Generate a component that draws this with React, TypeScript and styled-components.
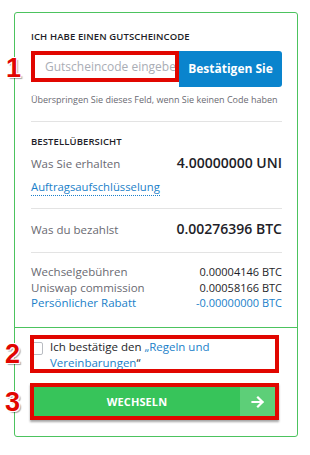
import React from "react";
import styled, { createGlobalStyle } from "styled-components";

const Global = createGlobalStyle`
  html, body { margin: 0; padding: 0; background: #fff; }
  body { font-family: "Open Sans", "Liberation Sans", sans-serif; -webkit-font-smoothing: antialiased; }
  * { box-sizing: border-box; }
`;

const Page = styled.div`
  padding: 12px 12px 18px 14px;
`;

const Card = styled.div`
  position: relative;
  width: 284px;
  border: 1px solid #4cc35e;
  border-radius: 3px;
`;

const Section = styled.div`
  padding: 17px 15px 16px 16px;
`;

const Heading = styled.div`
  font-size: 9.5px;
  line-height: 14px;
  font-weight: 600;
  color: #1e1e28;
  text-transform: uppercase;
  letter-spacing: 0.1px;
`;

const Divider = styled.div<{ $top: number }>`
  height: 1px;
  background: #e3e3e3;
  margin: ${(p) => p.$top}px 0 0;
`;

const Highlight = styled.div<{ $w: number; $h: number }>`
  position: relative;
  width: ${(p) => p.$w}px;
  height: ${(p) => p.$h}px;
  &::after {
    content: "";
    position: absolute;
    inset: 0;
    border: 4px solid #e10600;
    pointer-events: none;
  }
`;

const Num = styled.span<{ $top: number }>`
  position: absolute;
  left: -25px;
  top: ${(p) => p.$top}px;
  font-family: "Liberation Sans", Arial, sans-serif;
  font-weight: 700;
  font-size: 27px;
  line-height: 27px;
  color: #e10600;
  text-shadow: -1px -1px 0 #fff, 1px -1px 0 #fff, -1px 1px 0 #fff, 1px 1px 0 #fff,
    2px 2px 1px rgba(0, 0, 0, 0.35);
`;

const CodeRow = styled.div`
  display: flex;
  margin-top: 7px;
  height: 36px;
`;

const CodeInput = styled.input`
  width: 148px;
  height: 31px;
  border: none;
  outline: none;
  padding: 0 0 0 14px;
  font-family: inherit;
  font-size: 12px;
  color: #333;
  background: #fff;
  &::placeholder { color: #a9adb5; }
`;

const ConfirmButton = styled.button`
  flex: 1;
  height: 36px;
  border: none;
  border-radius: 0 3px 3px 0;
  background: #0a84cd;
  color: #fff;
  font-family: inherit;
  font-weight: 700;
  font-size: 12px;
  padding: 0 0 2px;
`;

const Hint = styled.div`
  margin-top: 6px;
  font-size: 9px;
  line-height: 14px;
  color: #6a6a72;
  white-space: nowrap;
`;

const SubHeading = styled(Heading)`
  margin-top: 13px;
`;

const Row = styled.div<{ $top: number }>`
  display: flex;
  justify-content: space-between;
  align-items: baseline;
  margin-top: ${(p) => p.$top}px;
  line-height: 20px;
`;

const Label = styled.span`
  font-size: 11.5px;
  color: #6a6a72;
`;

const BigValue = styled.span`
  font-size: 14px;
  font-weight: 600;
  color: #1e1e28;
`;

const Link = styled.a`
  display: inline-block;
  margin-top: 4px;
  font-size: 11.3px;
  line-height: 17px;
  color: #1a7fc9;
  text-decoration: none;
  border-bottom: 1px dotted #1a7fc9;
`;

const FeeList = styled.div`
  margin-top: 11px;
  display: flex;
  flex-direction: column;
`;

const FeeRow = styled.div<{ $blue?: boolean }>`
  display: flex;
  justify-content: space-between;
  line-height: 15.7px;
  font-size: 11.5px;
  color: ${(p) => (p.$blue ? "#1a7fc9" : "#6a6a72")};
`;

const FeeValue = styled.span<{ $blue?: boolean }>`
  font-size: 11px;
  color: ${(p) => (p.$blue ? "#1a7fc9" : "#1e1e28")};
`;

const Bottom = styled.div`
  border-top: 1px solid #4cc35e;
  padding: 7px 15px 16px 15px;
`;

const Agree = styled.label`
  display: flex;
  align-items: flex-start;
  height: 100%;
  padding: 4px 0 0 1px;
  font-size: 11.5px;
  line-height: 16px;
  color: #1e1e28;
`;

const Box = styled.span`
  flex: none;
  width: 12px;
  height: 13px;
  margin: 3px 7px 0 0;
  border: 1px solid #b9bcc2;
  border-radius: 2px;
  background: #fff;
`;

const AgreeLink = styled.span`
  color: #1a7fc9;
`;

const ButtonWrap = styled(Highlight)`
  margin-top: 10px;
  box-shadow: 0 2px 2px rgba(0, 0, 0, 0.35);
`;

const Exchange = styled.button`
  display: flex;
  width: 100%;
  height: 100%;
  border: none;
  padding: 0;
  background: #37c45a;
  font-family: inherit;
`;

const ExchangeLabel = styled.span`
  flex: 1;
  display: flex;
  align-items: center;
  justify-content: center;
  padding: 0 0 0 4px;
  color: #fff;
  font-weight: 700;
  font-size: 11px;
  letter-spacing: 0.1px;
`;

const ArrowPart = styled.span`
  width: 36px;
  display: flex;
  align-items: center;
  justify-content: center;
  background: #5dcf78;
  margin-right: 3px;
`;

export default function App() {
  return (
    <Page>
      <Global />
      <Card>
        <Section>
          <Heading>Ich habe einen Gutscheincode</Heading>
          <CodeRow>
            <Highlight $w={148} $h={31}>
              <Num $top={4}>1</Num>
              <CodeInput placeholder="Gutscheincode eingeben" />
            </Highlight>
            <ConfirmButton>Bestätigen Sie</ConfirmButton>
          </CodeRow>
          <Hint>Überspringen Sie dieses Feld, wenn Sie keinen Code haben</Hint>
          <Divider $top={14} />
          <SubHeading>Bestellübersicht</SubHeading>
          <Row $top={4}>
            <Label>Was Sie erhalten</Label>
            <BigValue>4.00000000 UNI</BigValue>
          </Row>
          <Link>Auftragsaufschlüsselung</Link>
          <Divider $top={12} />
          <Row $top={10}>
            <Label>Was du bezahlst</Label>
            <BigValue>0.00276396 BTC</BigValue>
          </Row>
          <Divider $top={12} />
          <FeeList>
            <FeeRow>
              <span>Wechselgebühren</span>
              <FeeValue>0.00004146 BTC</FeeValue>
            </FeeRow>
            <FeeRow>
              <span>Uniswap commission</span>
              <FeeValue>0.00058166 BTC</FeeValue>
            </FeeRow>
            <FeeRow $blue>
              <span>Persönlicher Rabatt</span>
              <FeeValue $blue>-0.00000000 BTC</FeeValue>
            </FeeRow>
          </FeeList>
        </Section>
        <Bottom>
          <Highlight $w={249} $h={38}>
            <Num $top={6}>2</Num>
            <Agree>
              <Box />
              <span>
                Ich bestätige den <AgreeLink>„Regeln und</AgreeLink>
                <br />
                <AgreeLink>Vereinbarungen</AgreeLink>“
              </span>
            </Agree>
          </Highlight>
          <ButtonWrap $w={249} $h={37}>
            <Num $top={6}>3</Num>
            <Exchange>
              <ExchangeLabel>WECHSELN</ExchangeLabel>
              <ArrowPart>
                <svg width="14" height="14" viewBox="0 0 14 14" fill="none" stroke="#fff" strokeWidth="2.2" strokeLinecap="square">
                  <path d="M1.5 7h10M7 2.5L11.5 7 7 11.5" />
                </svg>
              </ArrowPart>
            </Exchange>
          </ButtonWrap>
        </Bottom>
      </Card>
    </Page>
  );
}
